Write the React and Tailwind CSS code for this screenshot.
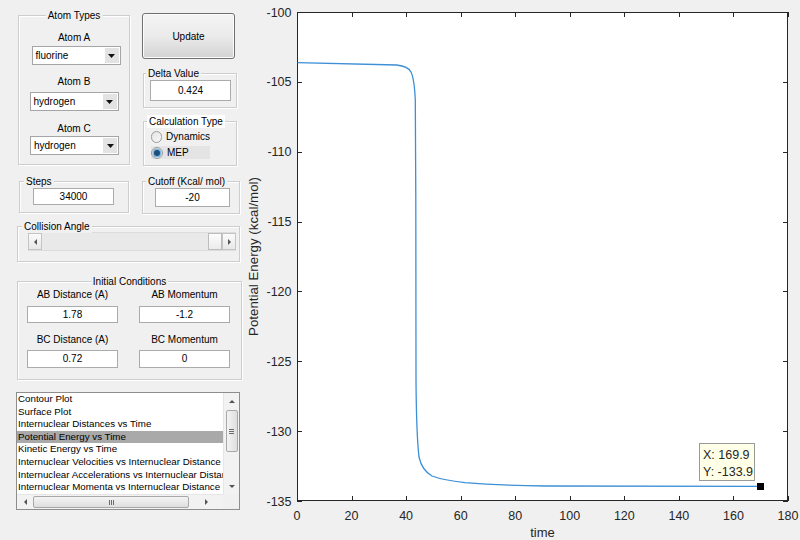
import clsx from 'clsx'

const listItems = [
  'Contour Plot',
  'Surface Plot',
  'Internuclear Distances vs Time',
  'Potential Energy vs Time',
  'Kinetic Energy vs Time',
  'Internuclear Velocities vs Internuclear Distance',
  'Internuclear Accelerations vs Internuclear Distances',
  'Internuclear Momenta vs Internuclear Distance',
]

function Group({ title, center, titleClass, className, children }) {
  return (
    <div
      className={clsx(
        'relative border border-[#cdcdcd] shadow-[inset_1px_1px_0_#ffffff,1px_1px_0_#ffffff]',
        className
      )}
    >
      <span
        className={clsx(
          'absolute -top-[7px] px-[2px] bg-[#f0f0f0] leading-[13px] whitespace-nowrap',
          center ? 'left-1/2 -translate-x-1/2' : titleClass
        )}
      >
        {title}
      </span>
      {children}
    </div>
  )
}

function Field({ value, className }) {
  return (
    <div
      className={clsx(
        'bg-white border border-[#ababab] flex items-center justify-center leading-none',
        className
      )}
    >
      {value}
    </div>
  )
}

function Select({ value, className }) {
  return (
    <div className={clsx('h-[19px] w-[89px] bg-white border border-[#a5a5a5] flex items-center', className)}>
      <span className="flex-1 pl-[3px] leading-none">{value}</span>
      <div className="w-[14px] h-[15px] mr-[1px] bg-[#e3e3e3] flex items-center justify-center">
        <svg width="7" height="4" viewBox="0 0 7 4">
          <path d="M0 0H7L3.5 4Z" fill="#111" />
        </svg>
      </div>
    </div>
  )
}

function Radio({ checked }) {
  return (
    <div className="w-[12px] h-[12px] rounded-full border border-[#9a9a9a] bg-linear-to-br from-[#e4e4e4] to-[#f8f8f8] flex items-center justify-center">
      {checked && (
        <div className="w-[6px] h-[6px] rounded-full bg-[#1d4f7c] shadow-[0_0_0_1.5px_#7fb3de]" />
      )}
    </div>
  )
}

function ArrowBtn({ dir }) {
  const d = {
    left: 'M3 0V6L0 3Z',
    right: 'M0 0V6L3 3Z',
  }[dir]
  return (
    <div className="w-[14px] h-full bg-linear-to-b from-[#fbfbfb] to-[#e8e8e8] border border-[#c4c4c4] flex items-center justify-center">
      <svg width="3" height="6" viewBox="0 0 3 6">
        <path d={d} fill="#555" />
      </svg>
    </div>
  )
}

function Chart() {
  const x0 = 297
  const x1 = 788
  const y0 = 12
  const y1 = 501
  const xs = (t) => x0 + (t / 180) * (x1 - x0)
  const ys = (e) => y0 + ((-100 - e) / 35) * (y1 - y0)
  const xTicks = [0, 20, 40, 60, 80, 100, 120, 140, 160, 180]
  const yTicks = [-100, -105, -110, -115, -120, -125, -130, -135]
  const curve =
    'M297.5,62.7 L396.7,65 C405,66 409,68 411,72 C413,76 414.6,85 415.3,100 L415.8,200 L416,380 C416.3,420 417,440 419,457 C421,466 425,472 432,476 C440,479 450,481 465,482.6 C490,484.6 520,485.6 545,486 L760.5,486.4'

  return (
    <svg width="555" height="540" viewBox="245 0 555 540" className="block">
      <rect x={x0} y={y0} width={x1 - x0} height={y1 - y0} fill="#ffffff" />
      <g stroke="#262626" strokeWidth="1">
        {xTicks.map((t) => {
          const x = Math.round(xs(t)) + 0.5
          return (
            <g key={t}>
              <line x1={x} y1={y1} x2={x} y2={y1 - 5} />
              <line x1={x} y1={y0} x2={x} y2={y0 + 5} />
            </g>
          )
        })}
        {yTicks.map((e) => {
          const y = Math.round(ys(e)) + 0.5
          return (
            <g key={e}>
              <line x1={x0} y1={y} x2={x0 + 5} y2={y} />
              <line x1={x1} y1={y} x2={x1 - 5} y2={y} />
            </g>
          )
        })}
      </g>
      <rect x={x0 + 0.5} y={y0 + 0.5} width={x1 - x0 - 1} height={y1 - y0 - 1} fill="none" stroke="#262626" strokeWidth="1" />
      <path d={curve} fill="none" stroke="#3d8fd6" strokeWidth="1.3" />
      <g fill="#262626" fontSize="12.5" fontFamily="'Liberation Sans', Arial, sans-serif">
        {yTicks.map((e) => (
          <text key={e} x={291.5} y={ys(e) + 4.5} textAnchor="end">
            {e}
          </text>
        ))}
        {xTicks.map((t) => (
          <text key={t} x={xs(t)} y={520} textAnchor="middle">
            {t}
          </text>
        ))}
        <text x={542.5} y={537} textAnchor="middle" fontSize="13">
          time
        </text>
        <text
          x={257.5}
          y={256.5}
          textAnchor="middle"
          fontSize="13.3"
          transform="rotate(-90 257.5 256.5)"
        >
          Potential Energy (kcal/mol)
        </text>
      </g>
      <rect x={757} y={483} width={7} height={7} fill="#000" />
      <rect x={699.5} y={443.5} width={55} height={37} fill="#ffffe8" stroke="#9a9a9a" />
      <g fill="#262626" fontSize="12.5" fontFamily="'Liberation Sans', Arial, sans-serif">
        <text x={703} y={459}>X: 169.9</text>
        <text x={703} y={475.5}>Y: -133.9</text>
      </g>
    </svg>
  )
}

export default function App() {
  return (
    <div className="w-[800px] h-[540px] bg-[#f0f0f0] flex overflow-hidden font-['Liberation_Sans',Arial,sans-serif] text-[10px] text-black">
      <div className="w-[245px] shrink-0 flex flex-col">
        {/* top block */}
        <div className="flex pt-[13px]">
          <Group title="Atom Types" center className="ml-[18px] mt-[2px] w-[112px] h-[150px]">
            <div className="flex flex-col items-center pt-[15px]">
              <div className="h-[13px] leading-[13px]">Atom A</div>
              <Select value="fluorine" className="mt-[2px] ml-[4px]" />
              <div className="h-[13px] leading-[13px] mt-[10px]">Atom B</div>
              <Select value="hydrogen" className="mt-[4px]" />
              <div className="h-[13px] leading-[13px] mt-[11px]">Atom C</div>
              <Select value="hydrogen" className="mt-[1px] ml-[1px]" />
            </div>
          </Group>
          <div className="ml-[12px] flex flex-col">
            <div className="w-[93px] h-[46px] rounded-[3px] border border-[#707070] bg-linear-to-b from-[#f4f4f4] via-[#ebebeb] to-[#d3d3d3] flex items-center justify-center shadow-[inset_0_0_0_1px_#fcfcfc]">
              Update
            </div>
            <Group title="Delta Value" titleClass="left-[2px]" className="ml-[1px] mt-[14px] w-[94px] h-[35px]">
              <Field value="0.424" className="ml-[6px] mt-[6px] w-[81px] h-[21px]" />
            </Group>
            <Group title="Calculation Type" titleClass="left-[3px] bg-white" className="ml-[1px] mt-[13px] w-[94px] h-[45px]">
              <div className="ml-[7px] mt-[8px] w-[59px] h-[13px] flex items-center">
                <Radio />
                <span className="ml-[4px] leading-none">Dynamics</span>
              </div>
              <div className="ml-[7px] mt-[3px] w-[59px] h-[13px] flex items-center bg-[#e4e4e4]">
                <Radio checked />
                <span className="ml-[4px] leading-none">MEP</span>
              </div>
            </Group>
          </div>
        </div>

        {/* steps / cutoff */}
        <div className="flex mt-[15px]">
          <Group title="Steps" titleClass="left-[4px]" className="ml-[19px] w-[110px] h-[32px]">
            <Field value="34000" className="ml-[13px] mt-[6px] w-[81px] h-[17px]" />
          </Group>
          <Group title="Cutoff (Kcal/ mol)" titleClass="left-[3px]" className="ml-[13px] w-[98px] h-[33px]">
            <Field value="-20" className="ml-[12px] mt-[6px] w-[75px] h-[19px]" />
          </Group>
        </div>

        {/* collision angle */}
        <Group title="Collision Angle" titleClass="left-[4px]" className="ml-[17px] mt-[12px] w-[223px] h-[36px]">
          <div className="ml-[10px] mt-[5px] w-[208px] h-[19px] flex bg-[#e9e9e9] border-y border-[#dcdcdc]">
            <ArrowBtn dir="left" />
            <div className="flex-1" />
            <div className="w-[14px] h-full bg-linear-to-b from-[#fdfdfd] to-[#ececec] border border-[#bdbdbd]" />
            <ArrowBtn dir="right" />
          </div>
        </Group>

        {/* initial conditions */}
        <Group title="Initial Conditions" center className="ml-[17px] mt-[19px] w-[225px] h-[99px]">
          <div className="grid grid-cols-[91px_91px] gap-x-[21px] ml-[9px] mt-[6px] text-center">
            <div className="h-[13px] leading-[13px]">AB Distance (A)</div>
            <div className="h-[13px] leading-[13px]">AB Momentum</div>
            <Field value="1.78" className="mt-[5px] h-[17px]" />
            <Field value="-1.2" className="mt-[5px] h-[17px]" />
            <div className="h-[13px] leading-[13px] mt-[10px]">BC Distance (A)</div>
            <div className="h-[13px] leading-[13px] mt-[10px]">BC Momentum</div>
            <Field value="0.72" className="mt-[4px] h-[18px]" />
            <Field value="0" className="mt-[4px] h-[18px]" />
          </div>
        </Group>

        {/* plot list */}
        <div className="ml-[16px] mt-[12px] w-[224px] h-[118px] border border-[#8e8e8e] bg-white flex flex-col">
          <div className="flex h-[101px]">
            <div className="w-[206px] overflow-hidden text-[9.75px]">
              {listItems.map((item) => (
                <div
                  key={item}
                  className={clsx(
                    'h-[12.6px] leading-[12.6px] pl-[1px] whitespace-nowrap',
                    item === 'Potential Energy vs Time' && 'bg-[#a9a9a9]'
                  )}
                >
                  {item}
                </div>
              ))}
            </div>
            <div className="w-[16px] bg-[#f2f2f2] flex flex-col items-center border-l border-[#e6e6e6]">
              <div className="h-[16px] flex items-center justify-center">
                <svg width="6" height="3" viewBox="0 0 6 3">
                  <path d="M0 3H6L3 0Z" fill="#555" />
                </svg>
              </div>
              <div className="w-[12px] h-[42px] mt-[1px] rounded-[2px] border border-[#a8a8a8] bg-linear-to-r from-[#f4f4f4] to-[#dedede] flex flex-col items-center justify-center gap-[1px]">
                <div className="w-[5px] h-px bg-[#6b6b6b]" />
                <div className="w-[5px] h-px bg-[#6b6b6b]" />
                <div className="w-[5px] h-px bg-[#6b6b6b]" />
              </div>
              <div className="flex-1" />
              <div className="h-[16px] flex items-center justify-center">
                <svg width="6" height="3" viewBox="0 0 6 3">
                  <path d="M0 0H6L3 3Z" fill="#555" />
                </svg>
              </div>
            </div>
          </div>
          <div className="flex h-[15px]">
            <div className="w-[206px] bg-[#f2f2f2] flex items-center border-t border-[#e6e6e6]">
              <div className="w-[16px] flex items-center justify-center">
                <svg width="3" height="6" viewBox="0 0 3 6">
                  <path d="M3 0V6L0 3Z" fill="#555" />
                </svg>
              </div>
              <div className="w-[156px] h-[12px] rounded-[2px] border border-[#a8a8a8] bg-linear-to-b from-[#f4f4f4] to-[#dedede] flex items-center justify-center gap-[1px]">
                <div className="w-px h-[5px] bg-[#6b6b6b]" />
                <div className="w-px h-[5px] bg-[#6b6b6b]" />
                <div className="w-px h-[5px] bg-[#6b6b6b]" />
              </div>
              <div className="flex-1 flex items-center justify-center">
                <svg width="3" height="6" viewBox="0 0 3 6">
                  <path d="M0 0V6L3 3Z" fill="#555" />
                </svg>
              </div>
            </div>
            <div className="w-[16px] bg-[#f0f0f0]" />
          </div>
        </div>
      </div>
      <div className="flex-1">
        <Chart />
      </div>
    </div>
  )
}
